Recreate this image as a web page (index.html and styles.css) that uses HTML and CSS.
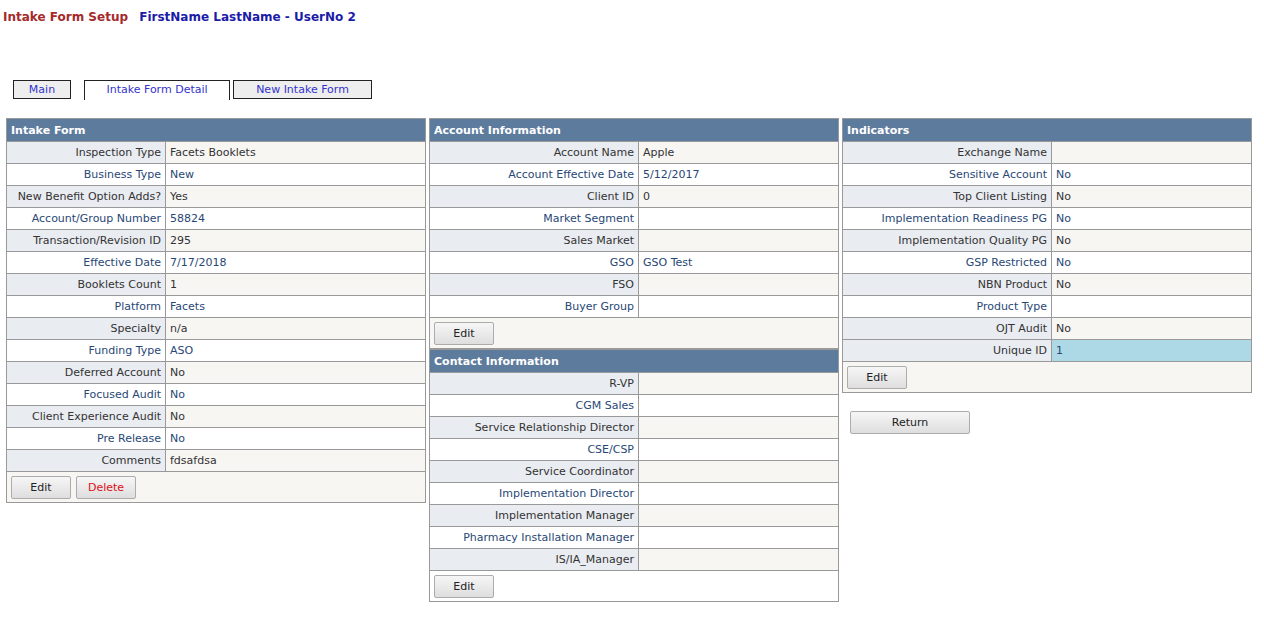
FILE: index.html
```html
<!DOCTYPE html>
<html>
<head>
  <meta charset="UTF-8">
  <title>Intake Form Setup</title>
  <link rel="stylesheet" href="styles.css">
</head>
<body>
<div class="page-title">
  <span class="app-name">Intake Form Setup</span>
  <span class="user-name">FirstName LastName - UserNo 2</span>
</div>

<div class="tabs">
  <a class="tab tab-main" href="#">Main</a>
  <a class="tab tab-detail active" href="#">Intake Form Detail</a>
  <a class="tab tab-new" href="#">New Intake Form</a>
</div>

<div class="panels">
  <div class="col">
    <table class="details">
      <tr class="head"><th colspan="2">Intake Form</th></tr>
      <tr><td class="lbl">Inspection Type</td><td>Facets Booklets</td></tr>
      <tr class="alt"><td class="lbl">Business Type</td><td>New</td></tr>
      <tr><td class="lbl">New Benefit Option Adds?</td><td>Yes</td></tr>
      <tr class="alt"><td class="lbl">Account/Group Number</td><td>58824</td></tr>
      <tr><td class="lbl">Transaction/Revision ID</td><td>295</td></tr>
      <tr class="alt"><td class="lbl">Effective Date</td><td>7/17/2018</td></tr>
      <tr><td class="lbl">Booklets Count</td><td>1</td></tr>
      <tr class="alt"><td class="lbl">Platform</td><td>Facets</td></tr>
      <tr><td class="lbl">Specialty</td><td>n/a</td></tr>
      <tr class="alt"><td class="lbl">Funding Type</td><td>ASO</td></tr>
      <tr><td class="lbl">Deferred Account</td><td>No</td></tr>
      <tr class="alt"><td class="lbl">Focused Audit</td><td>No</td></tr>
      <tr><td class="lbl">Client Experience Audit</td><td>No</td></tr>
      <tr class="alt"><td class="lbl">Pre Release</td><td>No</td></tr>
      <tr><td class="lbl">Comments</td><td>fdsafdsa</td></tr>
      <tr class="cmd"><td colspan="2"><button class="btn">Edit</button><button class="btn btn-delete">Delete</button></td></tr>
    </table>
  </div>

  <div class="col col-wide">
    <table class="details">
      <tr class="head"><th colspan="2">Account Information</th></tr>
      <tr><td class="lbl">Account Name</td><td>Apple</td></tr>
      <tr class="alt"><td class="lbl">Account Effective Date</td><td>5/12/2017</td></tr>
      <tr><td class="lbl">Client ID</td><td>0</td></tr>
      <tr class="alt"><td class="lbl">Market Segment</td><td></td></tr>
      <tr><td class="lbl">Sales Market</td><td></td></tr>
      <tr class="alt"><td class="lbl">GSO</td><td>GSO Test</td></tr>
      <tr><td class="lbl">FSO</td><td></td></tr>
      <tr class="alt"><td class="lbl">Buyer Group</td><td></td></tr>
      <tr class="cmd"><td colspan="2"><button class="btn">Edit</button></td></tr>
    </table>
    <table class="details stacked">
      <tr class="head"><th colspan="2">Contact Information</th></tr>
      <tr><td class="lbl">R-VP</td><td></td></tr>
      <tr class="alt"><td class="lbl">CGM Sales</td><td></td></tr>
      <tr><td class="lbl">Service Relationship Director</td><td></td></tr>
      <tr class="alt"><td class="lbl">CSE/CSP</td><td></td></tr>
      <tr><td class="lbl">Service Coordinator</td><td></td></tr>
      <tr class="alt"><td class="lbl">Implementation Director</td><td></td></tr>
      <tr><td class="lbl">Implementation Manager</td><td></td></tr>
      <tr class="alt"><td class="lbl">Pharmacy Installation Manager</td><td></td></tr>
      <tr><td class="lbl">IS/IA_Manager</td><td></td></tr>
      <tr class="cmd white"><td colspan="2"><button class="btn">Edit</button></td></tr>
    </table>
  </div>

  <div class="col col-wide">
    <table class="details">
      <tr class="head"><th colspan="2">Indicators</th></tr>
      <tr><td class="lbl">Exchange Name</td><td></td></tr>
      <tr class="alt"><td class="lbl">Sensitive Account</td><td>No</td></tr>
      <tr><td class="lbl">Top Client Listing</td><td>No</td></tr>
      <tr class="alt"><td class="lbl">Implementation Readiness PG</td><td>No</td></tr>
      <tr><td class="lbl">Implementation Quality PG</td><td>No</td></tr>
      <tr class="alt"><td class="lbl">GSP Restricted</td><td>No</td></tr>
      <tr><td class="lbl">NBN Product</td><td>No</td></tr>
      <tr class="alt"><td class="lbl">Product Type</td><td></td></tr>
      <tr><td class="lbl">OJT Audit</td><td>No</td></tr>
      <tr><td class="lbl">Unique ID</td><td class="highlight">1</td></tr>
      <tr class="cmd"><td colspan="2"><button class="btn">Edit</button></td></tr>
    </table>
    <div class="return-row">
      <button class="btn btn-return">Return</button>
    </div>
  </div>
</div>
</body>
</html>
```

FILE: styles.css
```css
body {
  margin: 0;
  padding: 0;
  font-family: Verdana, 'DejaVu Sans', sans-serif;
  font-size: 11px;
  color: #333333;
  background: #fff;
}
.page-title {
  padding: 10px 3px 0 3px;
  font-size: 12px;
  font-weight: bold;
}
.app-name {
  color: #a52a2a;
  margin-right: 7px;
}
.user-name {
  color: #1c1ca8;
}
/* tab strip */
.tabs {
  display: flex;
  align-items: flex-start;
  margin: 56px 0 0 13px;
  height: 20px;
}
.tab {
  display: block;
  box-sizing: border-box;
  height: 19px;
  line-height: 17px;
  text-align: center;
  color: #3333cc;
  text-decoration: none;
  background: #eeeeee;
  border: 1px solid #222;
}
.tab.active {
  background: #fff;
  border-bottom: none;
  height: 20px;
}
.tab-main { width: 58px; }
.tab-detail { width: 146px; margin-left: 13px; margin-right: 3px; }
.tab-new { width: 139px; }

.panels {
  display: flex;
  align-items: flex-start;
  gap: 3px;
  margin: 18px 0 0 6px;
}
.col {
  width: 420px;
}
.col-wide {
  width: 410px;
}
table.details {
  width: 100%;
  border-collapse: collapse;
  border: 1px solid #999;
  background: #f7f6f3;
}
table.details.stacked {
  border-top: none;
}
.details th {
  background: #5d7b9d;
  color: #fff;
  font-weight: bold;
  text-align: left;
  height: 22px;
  padding: 0 4px;
  border: 1px solid #999;
}
.details td {
  height: 21px;
  padding: 0 4px;
  border: 1px solid #999;
  color: #333333;
  background: #f7f6f3;
}
.details tr.alt td {
  background: #fff;
  color: #284775;
}
.details td.lbl {
  background: #e9ecf1;
  text-align: right;
  white-space: nowrap;
  width: 150px;
}
.col-wide .details td.lbl {
  width: 200px;
}
.details td.highlight {
  background: #add8e6;
  color: #284775;
}
.details tr.cmd td {
  height: 30px;
  padding: 0 4px;
}
.details tr.cmd.white td {
  background: #fff;
}
.btn {
  box-sizing: border-box;
  width: 60px;
  height: 23px;
  margin-right: 5px;
  font-family: Verdana, 'DejaVu Sans', sans-serif;
  font-size: 11px;
  color: #222;
  background: linear-gradient(#f6f6f6, #dedede);
  border: 1px solid #acacac;
  border-radius: 2px;
  vertical-align: middle;
}
.btn-delete {
  color: #e0101a;
}
.btn-return {
  width: 120px;
}
.return-row {
  margin: 18px 0 0 8px;
}
```
